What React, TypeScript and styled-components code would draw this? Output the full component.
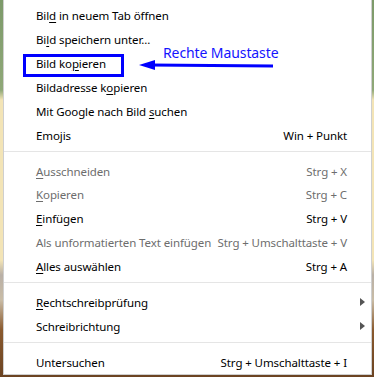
import React from "react";
import styled, { createGlobalStyle } from "styled-components";

const GlobalStyle = createGlobalStyle`
  html, body {
    margin: 0;
    padding: 0;
    width: 374px;
    height: 377px;
    overflow: hidden;
  }
  body {
    background: linear-gradient(
      to bottom,
      #7d9a6a 0px,
      #8fa878 90px,
      #f3e4b6 100px,
      #f3e4b6 260px,
      #b9b0a6 275px,
      #c9bca6 300px,
      #8a5a2e 330px,
      #6b4322 377px
    );
    font-family: "Segoe UI", "Noto Sans", "Open Sans", sans-serif;
  }
`;

const Page = styled.div`
  position: relative;
  width: 374px;
  height: 377px;
  padding-left: 3px;
  box-sizing: border-box;
`;

const Menu = styled.div`
  width: 369px;
  height: 375px;
  box-sizing: border-box;
  background: #ffffff;
  border: 1px solid #cfcfcf;
  border-top: none;
  padding-top: 4px;
  display: flex;
  flex-direction: column;
`;

const Row = styled.div<{ disabled?: boolean }>`
  height: 24px;
  display: flex;
  align-items: center;
  padding: 0 24px 0 32px;
  font-size: 11.5px;
  letter-spacing: -0.1px;
  color: ${(p) => (p.disabled ? "#6d6d6d" : "#000000")};
`;

const Label = styled.span`
  flex: 1;
  white-space: nowrap;
`;

const Key = styled.span`
  text-decoration: underline;
  text-underline-offset: 2px;
`;

const Shortcut = styled.span`
  white-space: nowrap;
  margin-left: 6px;
`;

const Arrow = styled.span`
  width: 0;
  height: 0;
  border-top: 4px solid transparent;
  border-bottom: 4px solid transparent;
  border-left: 5px solid #555555;
  margin-right: -18px;
`;

const Separator = styled.div`
  height: 1px;
  background: #e5e5e5;
  margin: 4px 0 7px;
`;

const Highlight = styled.div`
  position: absolute;
  left: 23px;
  top: 54px;
  width: 101px;
  height: 23px;
  box-sizing: border-box;
  border: 3px solid #0000ff;
`;

const Note = styled.div`
  position: absolute;
  left: 163px;
  top: 43px;
  font-size: 14px;
  letter-spacing: -0.1px;
  color: #1414ff;
  white-space: nowrap;
`;

const Pointer = styled.svg`
  position: absolute;
  left: 138px;
  top: 58px;
`;

type Item = {
  label: React.ReactNode;
  shortcut?: string;
  disabled?: boolean;
  submenu?: boolean;
};

const u = (before: string, key: string, after: string) => (
  <>
    {before}
    <Key>{key}</Key>
    {after}
  </>
);

const groups: Item[][] = [
  [
    { label: u("Bil", "d", " in neuem Tab öffnen") },
    { label: u("Bi", "l", "d speichern unter...") },
    { label: u("Bild ko", "p", "ieren") },
    { label: u("Bildadresse k", "o", "pieren") },
    { label: u("Mit Google nach Bild ", "s", "uchen") },
    { label: "Emojis", shortcut: "Win + Punkt" },
  ],
  [
    { label: u("", "A", "usschneiden"), shortcut: "Strg + X", disabled: true },
    { label: u("", "K", "opieren"), shortcut: "Strg + C", disabled: true },
    { label: u("", "E", "infügen"), shortcut: "Strg + V" },
    {
      label: "Als unformatierten Text einfügen",
      shortcut: "Strg + Umschalttaste + V",
      disabled: true,
    },
    { label: u("", "A", "lles auswählen"), shortcut: "Strg + A" },
  ],
  [
    { label: u("", "R", "echtschreibprüfung"), submenu: true },
    { label: "Schreibrichtung", submenu: true },
  ],
  [{ label: "Untersuchen", shortcut: "Strg + Umschalttaste + I" }],
];

const App = () => {
  return (
    <Page>
      <GlobalStyle />
      <Menu>
        {groups.map((group, gi) => (
          <React.Fragment key={gi}>
            {gi > 0 && <Separator />}
            {group.map((item, i) => (
              <Row key={i} disabled={item.disabled}>
                <Label>{item.label}</Label>
                {item.shortcut && <Shortcut>{item.shortcut}</Shortcut>}
                {item.submenu && <Arrow />}
              </Row>
            ))}
          </React.Fragment>
        ))}
      </Menu>
      <Highlight />
      <Note>Rechte Maustaste</Note>
      <Pointer width="138" height="14" viewBox="0 0 138 14">
        <line x1="12" y1="7" x2="135" y2="8" stroke="#0000ff" strokeWidth="3" />
        <polygon points="1,7 17,2 17,12" fill="#0000ff" />
      </Pointer>
    </Page>
  );
};

export default App;
